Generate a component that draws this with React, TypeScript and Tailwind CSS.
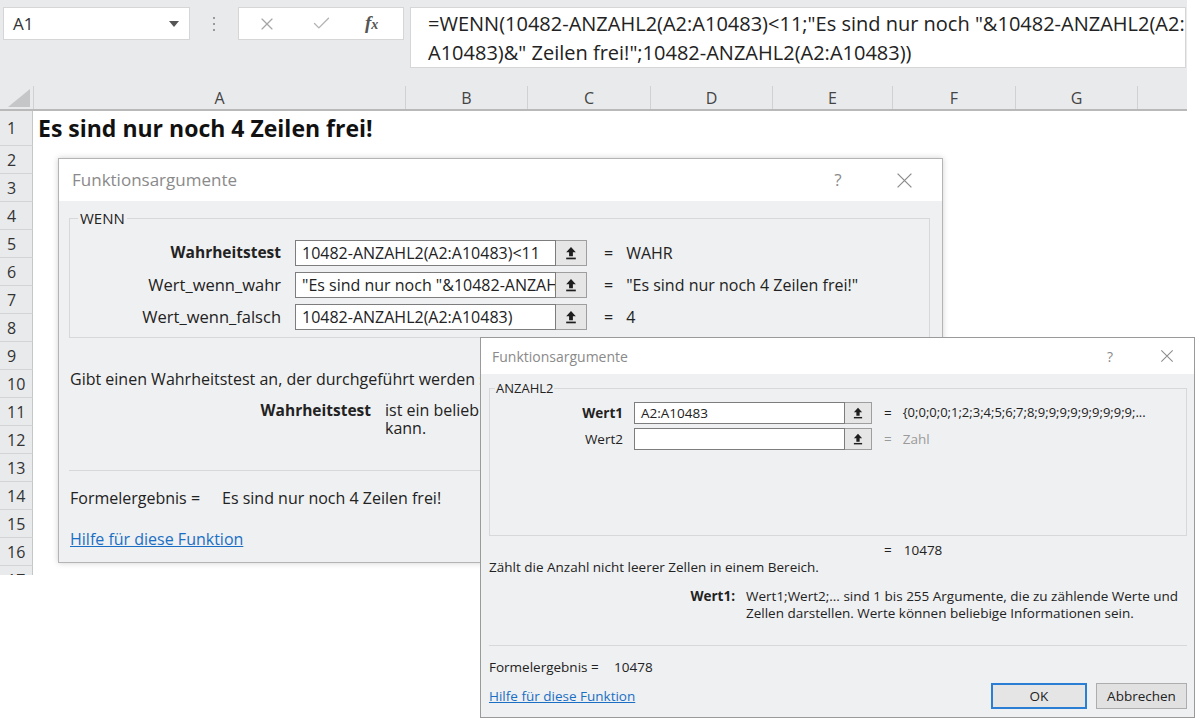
import React from 'react';
import { X, Check } from 'lucide-react';

const columns = [
  { label: 'A', width: 'w-[372px]' },
  { label: 'B', width: 'w-[122px]' },
  { label: 'C', width: 'w-[123px]' },
  { label: 'D', width: 'w-[122px]' },
  { label: 'E', width: 'w-[120px]' },
  { label: 'F', width: 'w-[123px]' },
  { label: 'G', width: 'w-[122px]' },
  { label: '', width: 'flex-1' },
];

const rows = [2, 3, 4, 5, 6, 7, 8, 9, 10, 11, 12, 13, 14, 15, 16, 17];

function RefButtonIcon({ size = 14 }: { size?: number }) {
  return (
    <svg width={size} height={size} viewBox="0 0 12 14">
      <path d="M6 1L1.2 6.2H4.1V10.2H7.9V6.2H10.8Z" fill="#1e1e1e" />
      <rect x="1.2" y="11.6" width="9.6" height="1.7" fill="#1e1e1e" />
    </svg>
  );
}

function CloseGlyph({ size }: { size: number }) {
  return (
    <svg width={size} height={size} viewBox="0 0 16 16">
      <path d="M1.5 1.5L14.5 14.5M14.5 1.5L1.5 14.5" stroke="#8c8c8c" strokeWidth="1.2" />
    </svg>
  );
}

type ArgRow = { label: string; bold?: boolean; input: string; result: string };

const wennArgs: ArgRow[] = [
  { label: 'Wahrheitstest', bold: true, input: '10482-ANZAHL2(A2:A10483)<11', result: 'WAHR' },
  { label: 'Wert_wenn_wahr', input: '"Es sind nur noch "&10482-ANZAHL2(A2:A10483)&" Zeilen frei!"', result: '"Es sind nur noch 4 Zeilen frei!"' },
  { label: 'Wert_wenn_falsch', input: '10482-ANZAHL2(A2:A10483)', result: '4' },
];

function WennDialog() {
  return (
    <div className="absolute left-[58px] top-[158px] w-[885px] h-[405px] border border-[#b4b4b4] shadow-[0_0_6px_rgba(0,0,0,0.18)] bg-[#eff0f1] flex flex-col text-[#222] text-[16px]">
      {/* Title bar */}
      <div className="h-[42px] bg-white flex items-center pl-[13px] shrink-0">
        <span className="text-[17px] text-[#8a8a8a]">Funktionsargumente</span>
        <div className="ml-auto flex items-center pr-[29px]">
          <span className="text-[17px] text-[#8a8a8a] w-[12px] text-center">?</span>
          <span className="ml-[52px] flex"><CloseGlyph size={17} /></span>
        </div>
      </div>

      <div className="px-[10px] pt-[7px] flex flex-col">
        <fieldset className="border border-[#d6d8da] mr-[2px] pb-[7px]">
          <legend className="ml-[8px] px-[2px] text-[15px] leading-[20px]">WENN</legend>
          <div className="flex flex-col gap-[6px] pt-[12px]">
            {wennArgs.map((arg) => (
              <div key={arg.label} className="flex items-center h-[26px]">
                <span className={`w-[211px] shrink-0 text-right whitespace-nowrap ${arg.bold ? 'font-bold text-[15.5px]' : 'text-[16.5px]'}`}>{arg.label}</span>
                <div className="ml-[14px] w-[261px] shrink-0 h-[26px] border border-[#7d7d7d] bg-white px-[6px] text-[16px] leading-[24px] whitespace-nowrap overflow-hidden">
                  {arg.input}
                </div>
                <div className="w-[31px] shrink-0 h-[26px] border border-[#9e9e9e] border-l-0 bg-[#e6e6e6] flex items-center justify-center">
                  <RefButtonIcon />
                </div>
                <span className="ml-[17px]">=</span>
                <span className="ml-[13px] whitespace-nowrap">{arg.result}</span>
              </div>
            ))}
          </div>
        </fieldset>

        <p className="mt-[31px] pl-[1px] leading-[20px] whitespace-nowrap">
          Gibt einen Wahrheitstest an, der durchgeführt werden soll, und gibt einen Wert zurück, wenn WAHR, und einen anderen Wert, wenn FALSCH.
        </p>
        <div className="mt-[12px] flex leading-[18px] whitespace-nowrap">
          <span className="w-[302px] shrink-0 text-right font-bold text-[15.5px]">Wahrheitstest</span>
          <span className="ml-[14px]">
            ist ein beliebiger Wert oder Ausdruck, der als WAHR oder FALSCH bewertet werden
            <br />
            kann.
          </span>
        </div>

        <div className="mt-[33px] border-t border-[#d6d8da] mr-[2px]" />

        <div className="mt-[17px] pl-[1px] flex leading-[20px]">
          <span className="w-[152px] shrink-0">Formelergebnis =</span>
          <span>Es sind nur noch 4 Zeilen frei!</span>
        </div>
        <a className="mt-[21px] pl-[1px] leading-[20px] text-[#1a6fc4] underline">Hilfe für diese Funktion</a>
      </div>
    </div>
  );
}

function AnzahlDialog() {
  return (
    <div className="absolute left-[480px] top-[337px] w-[715px] h-[381px] border border-[#9a9a9a] bg-[#eff0f1] flex flex-col text-[#222] text-[13.5px]">
      <div className="h-[36px] bg-white flex items-center pl-[11px] shrink-0">
        <span className="text-[14px] text-[#8a8a8a]">Funktionsargumente</span>
        <div className="ml-auto flex items-center pr-[20px]">
          <span className="text-[14px] text-[#8a8a8a] w-[10px] text-center">?</span>
          <span className="ml-[45px] flex"><CloseGlyph size={14} /></span>
        </div>
      </div>

      <div className="flex flex-col pl-[8px] pr-[7px]">
        <fieldset className="border border-[#d6d8da] mt-[6px]">
          <legend className="ml-[5px] px-[1px] text-[13px] leading-[16px]">ANZAHL2</legend>
          <div className="h-[139px] flex flex-col gap-[4px] pt-[6px]">
            <div className="flex items-center h-[22px]">
              <span className="w-[133px] shrink-0 text-right font-bold">Wert1</span>
              <div className="ml-[11px] w-[211px] shrink-0 h-[22px] border border-[#7d7d7d] bg-white px-[6px] leading-[20px]">A2:A10483</div>
              <div className="w-[27px] shrink-0 h-[22px] border border-[#9e9e9e] border-l-0 bg-[#e6e6e6] flex items-center justify-center">
                <RefButtonIcon size={12} />
              </div>
              <span className="ml-[12px]">=</span>
              <span className="ml-[11px] text-[13px] whitespace-nowrap">{'{0;0;0;0;1;2;3;4;5;6;7;8;9;9;9;9;9;9;9;9;9;...'}</span>
            </div>
            <div className="flex items-center h-[22px]">
              <span className="w-[133px] shrink-0 text-right">Wert2</span>
              <div className="ml-[11px] w-[211px] shrink-0 h-[22px] border border-[#7d7d7d] bg-white" />
              <div className="w-[27px] shrink-0 h-[22px] border border-[#9e9e9e] border-l-0 bg-[#e6e6e6] flex items-center justify-center">
                <RefButtonIcon size={12} />
              </div>
              <span className="ml-[12px] text-[#9a9a9a]">=</span>
              <span className="ml-[11px] text-[#9a9a9a]">Zahl</span>
            </div>
          </div>
        </fieldset>

        <div className="mt-[6px] pl-[395px] leading-[16px]">
          <span>=</span>
          <span className="ml-[12px]">10478</span>
        </div>
        <p className="mt-[1px] leading-[16px]">Zählt die Anzahl nicht leerer Zellen in einem Bereich.</p>
        <div className="mt-[13px] flex leading-[17px] whitespace-nowrap">
          <span className="w-[246px] shrink-0 text-right font-bold">Wert1:</span>
          <span className="ml-[11px]">
            Wert1;Wert2;... sind 1 bis 255 Argumente, die zu zählende Werte und
            <br />
            Zellen darstellen. Werte können beliebige Informationen sein.
          </span>
        </div>

        <div className="mt-[23px] border-t border-[#d6d8da]" />

        <div className="mt-[13px] flex leading-[16px]">
          <span className="w-[125px] shrink-0">Formelergebnis =</span>
          <span>10478</span>
        </div>

        <div className="mt-[8px] h-[26px] flex items-center">
          <a className="text-[#1a6fc4] underline">Hilfe für diese Funktion</a>
          <div className="ml-auto flex gap-[9px]">
            <button className="w-[96px] h-[26px] border-2 border-[#2a7fd4] bg-[#e5e5e5]">OK</button>
            <button className="w-[91px] h-[26px] border border-[#adadad] bg-[#e1e1e1]">Abbrechen</button>
          </div>
        </div>
      </div>
    </div>
  );
}

export default function App() {
  return (
    <div className="relative w-[1200px] h-[720px] bg-white overflow-hidden font-['Open_Sans',sans-serif]">
      {/* Excel window */}
      <div className="w-[1187px] h-[575px] overflow-hidden flex flex-col bg-white">
        {/* Name box + formula bar */}
        <div className="h-[86px] bg-[#e9eaec] flex items-start pt-[7px] pl-[3px] shrink-0">
          <div className="w-[187px] h-[33px] bg-white border border-[#d6d6d6] flex items-center pl-[9px] pr-[10px]">
            <span className="text-[17px] text-[#333]">A1</span>
            <svg className="ml-auto" width="10" height="6" viewBox="0 0 10 6">
              <path d="M0 0H10L5 6Z" fill="#555" />
            </svg>
          </div>
          <div className="w-[48px] h-[33px] flex flex-col items-center justify-center gap-[4px]">
            <span className="w-[2px] h-[2px] bg-[#9a9a9a]" />
            <span className="w-[2px] h-[2px] bg-[#9a9a9a]" />
            <span className="w-[2px] h-[2px] bg-[#9a9a9a]" />
          </div>
          <div className="w-[166px] h-[33px] bg-white border border-[#d6d6d6] flex items-center">
            <X size={20} strokeWidth={1.4} color="#a6a6a6" className="ml-[18px]" />
            <Check size={21} strokeWidth={1.6} color="#b4b4b4" className="ml-[34px]" />
            <span className="ml-[33px] font-['Liberation_Serif',serif] italic font-bold text-[19px] text-[#555]">
              f<span className="text-[14px]">x</span>
            </span>
          </div>
          <div className="ml-[6px] w-[776px] h-[61px] bg-white border border-[#d6d6d6] pl-[17px] pt-[1px] text-[20px] leading-[29px] text-[#222] whitespace-nowrap overflow-hidden">
            =WENN(10482-ANZAHL2(A2:A10483)&lt;11;"Es sind nur noch "&amp;10482-ANZAHL2(A2:
            <br />
            A10483)&amp;" Zeilen frei!";10482-ANZAHL2(A2:A10483))
          </div>
        </div>

        {/* Column headers */}
        <div className="h-[25px] flex bg-[#e9eaec] border-b-2 border-[#b9b9b9] shrink-0">
          <div className="w-[33px] flex items-end justify-end pr-[3px] pb-[2px]">
            <svg width="22" height="18" viewBox="0 0 22 18">
              <path d="M22 0V18H0Z" fill="#c4c6c8" />
            </svg>
          </div>
          {columns.map((col, i) => (
            <div
              key={i}
              className={`${col.width} border-l border-[#cfd1d3] flex items-center justify-center text-[16px] text-[#444]`}
            >
              {col.label}
            </div>
          ))}
        </div>

        {/* Grid */}
        <div className="flex h-[35px] shrink-0">
          <div className="w-[33px] bg-[#e9eaec] border-r border-[#c4c6c8] border-b border-b-[#d2d4d6] flex items-center pl-[7px] text-[16px] text-[#333]">1</div>
          <div className="flex-1 flex items-center pl-[5px] text-[23px] font-bold text-[#111]">Es sind nur noch 4 Zeilen frei!</div>
        </div>
        {rows.map((r) => (
          <div key={r} className="flex h-[28px] shrink-0">
            <div className="w-[33px] bg-[#e9eaec] border-r border-[#c4c6c8] border-b border-b-[#d2d4d6] flex items-center pl-[7px] text-[16px] text-[#333]">
              {r}
            </div>
            <div className="flex-1" />
          </div>
        ))}
      </div>

      <WennDialog />
      <AnzahlDialog />
    </div>
  );
}
